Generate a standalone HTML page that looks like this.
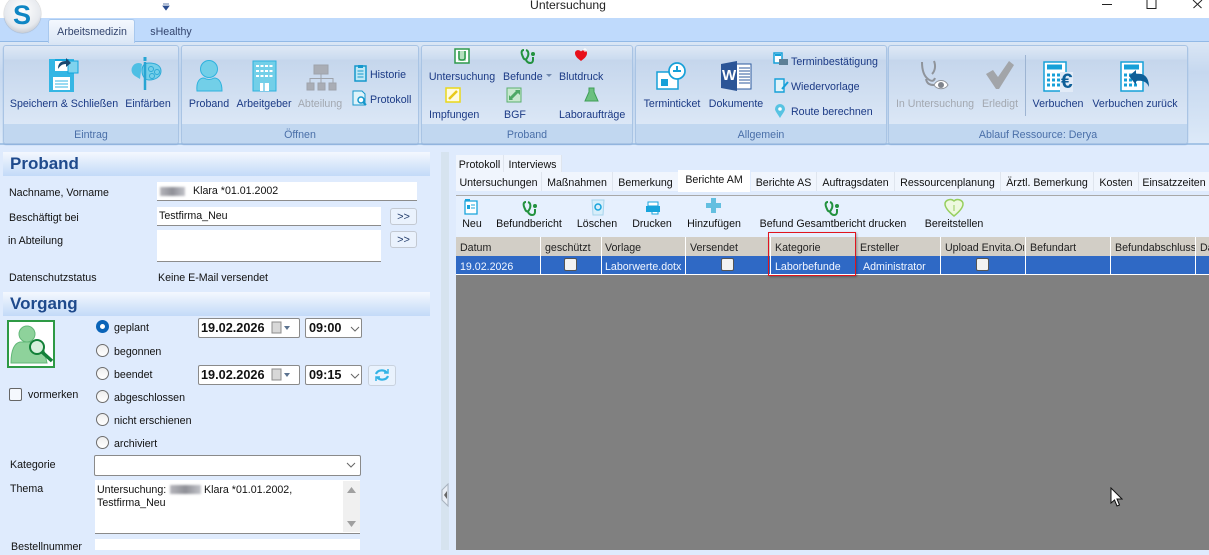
<!DOCTYPE html>
<html><head><meta charset="utf-8"><style>
html,body{margin:0;padding:0}
body{width:1209px;height:550px;overflow:hidden;position:relative;background:#dfebfd;font-family:"Liberation Sans",sans-serif;font-size:10.65px;color:#111}
div,span,svg{position:absolute}
.t{white-space:nowrap;line-height:16px}
.n{color:#1b3a85;font-size:10.65px}
.c{transform:translateX(-50%)}
.d{color:#a3a8b0}
.g{top:45px;height:97px;border:1px solid #a9c4e4;border-radius:3px;background:linear-gradient(#dfe8f5 0,#cbdcf0 13px,#c5d6ec 14px,#dbe7f6 78px);box-shadow:0 1px 1px #8fb2dc;overflow:hidden}
.gl{left:0;right:0;top:78px;height:19px;background:#c1d7f0;color:#4a6fa8;text-align:center;line-height:22px;font-size:10.65px}
.h{left:3px;width:427px;height:24px;background:linear-gradient(#f4f8fe,#c3daf8)}
.hh{font-weight:bold;font-size:17px;color:#1f4a8c;left:10px;line-height:20px;white-space:nowrap}
.f{background:#fff;border-bottom:1px solid #8c8c8c;box-sizing:border-box;line-height:19px;padding-left:2px;white-space:nowrap}
.r{width:11px;height:11px;border:1px solid #6d6d6d;border-radius:50%;left:96px;background:linear-gradient(#eee,#fff)}
.b{width:25px;height:15px;border:1px solid #c3c9d2;border-radius:3px;background:#eaf2fd;left:390px;text-align:center;font-size:11px;line-height:17px;color:#27406e}
.dt{background:#fff;border:1px solid #8a8a8a;border-radius:2px;height:18px;font-weight:bold;font-size:12.7px;line-height:18px;padding-left:2px;width:98px}
.tm{background:#fff;border:1px solid #8a8a8a;border-radius:2px;height:18px;font-weight:bold;font-size:12.7px;line-height:18px;padding-left:3px;width:52px}
.tab{top:172px;height:19px;background:#f0f5fd;line-height:22px;text-align:center;white-space:nowrap;border-right:1px solid #dfe5ee}
.col{top:237px;height:38px;width:1px;background:#fff}
.hd{top:241px;line-height:14px;white-space:nowrap;color:#222}
.rw{top:259px;line-height:16px;white-space:nowrap;color:#f2f6ff}
.ck{top:258px;width:11px;height:11px;border:1px solid #555;border-radius:2px;background:#f2f2f2}
.blur{background:linear-gradient(90deg,#b5b5bb,#8f9097 50%,#c2c3c9);filter:blur(1px);height:9px}
</style></head><body>
<div style="left:0;top:0;width:1209px;height:18px;background:#fff"></div>
<div style="left:0;top:18px;width:1209px;height:24px;background:#bfdafc;border-bottom:1px solid #92b9e6;box-sizing:border-box"></div>
<div style="left:0;top:42px;width:1209px;height:103px;background:linear-gradient(#dae6f5,#c6d8ef 30%,#dce9f8);border-bottom:2px solid #a5c4e6;box-sizing:border-box"></div>
<div style="left:4px;top:-5px;width:37px;height:38px;border-radius:50%;background:radial-gradient(circle at 50% 40%,#fff,#e6e9ee 60%,#a3a9b3);box-shadow:0 0 1px #777"></div>
<div style="left:13px;top:2px;font-weight:bold;font-size:27px;line-height:26px;color:#0f86c4;white-space:nowrap">S</div>
<svg style="left:162px;top:3px" width="9" height="8"><path d="M1 1h6M1 3h6L4 7z" fill="#2a4c8e" stroke="#2a4c8e" stroke-width=".8"/></svg>
<div class="t c" style="left:568px;top:-3px;font-size:12.2px;color:#222">Untersuchung</div>
<svg style="left:1090px;top:0" width="119" height="10" fill="none" stroke="#222"><path d="M12 4.500h10M57 0v8.500h9V0M103 0l8.500 8M112 0l-8.500 8"/></svg>
<div style="left:48px;top:19px;width:87px;height:24px;background:linear-gradient(#f4f8fe,#dbe7f6);border:1px solid #a8c8ee;border-bottom:0;border-radius:3px 3px 0 0;box-sizing:border-box"></div>
<div class="t c n" style="left:92px;top:24px;color:#33456e">Arbeitsmedizin</div>
<div class="t c n" style="left:171px;top:24px;color:#33456e">sHealthy</div>

<div class="g" style="left:3px;width:174px"><div class="gl">Eintrag</div></div>
<div class="g" style="left:181px;width:236px"><div class="gl">Öffnen</div></div>
<div class="g" style="left:421px;width:210px"><div class="gl">Proband</div></div>
<div class="g" style="left:635px;width:250px"><div class="gl">Allgemein</div></div>
<div class="g" style="left:888px;width:298px"><div class="gl">Ablauf Ressource: Derya</div></div>
<div style="left:1025px;top:55px;width:1px;height:61px;background:#9db4d2"></div>

<div class="t n c" style="left:64px;top:96px">Speichern &amp; Schließen</div>
<div class="t n c" style="left:148px;top:96px">Einfärben</div>
<div class="t n c" style="left:209px;top:96px">Proband</div>
<div class="t n c" style="left:264px;top:96px">Arbeitgeber</div>
<div class="t n c d" style="left:320px;top:96px">Abteilung</div>
<div class="t n" style="left:370px;top:67px">Historie</div>
<div class="t n" style="left:370px;top:92px">Protokoll</div>
<div class="t n c" style="left:462px;top:69px">Untersuchung</div>
<div class="t n" style="left:503px;top:69px">Befunde</div>
<div class="t n" style="left:559px;top:69px">Blutdruck</div>
<div class="t n" style="left:429px;top:107px">Impfungen</div>
<div class="t n" style="left:504px;top:107px">BGF</div>
<div class="t n" style="left:559px;top:107px">Laboraufträge</div>
<div class="t n c" style="left:672px;top:96px">Terminticket</div>
<div class="t n c" style="left:736px;top:96px">Dokumente</div>
<div class="t n" style="left:791px;top:54px">Terminbestätigung</div>
<div class="t n" style="left:791px;top:79px">Wiedervorlage</div>
<div class="t n" style="left:791px;top:104px">Route berechnen</div>
<div class="t n c d" style="left:935px;top:96px">In Untersuchung</div>
<div class="t n c d" style="left:1000px;top:96px">Erledigt</div>
<div class="t n c" style="left:1058px;top:96px">Verbuchen</div>
<div class="t n c" style="left:1135px;top:96px">Verbuchen zurück</div>

<svg style="left:0;top:42px" width="1209" height="80" fill="none">
<path d="M50 18h23v31H50z" fill="#fff" stroke="#12a5dd" stroke-width="2"/>
<path d="M49 17h6v12h14V17h5v33H49z" fill="#35b6e4"/>
<path d="M53 35h17v13H53z" fill="#fff"/><path d="M55 39h13M55 42h13M55 45h13" stroke="#35b6e4"/>
<path d="M68 19h10V31H68z" fill="#7fd3ee" stroke="#12a5dd"/>
<path d="M58 27c0-6 3-8 8-8v-3l5 5-5 4v-3c-4 0-6 2-8 5z" fill="#17476f"/>
<path d="M142 22a6 6 0 0 0-7 12l5 3z" fill="#4fbfe4"/>
<path d="M149 21c-5 0-7 3-7 8s3 9 7 9c6 0 12-3 12-9s-6-8-12-8z" fill="#76cfe9" stroke="#2da9d6"/>
<circle cx="151" cy="27" r="2.500" stroke="#2da9d6"/><circle cx="157" cy="30" r="2.500" stroke="#2da9d6"/><circle cx="152" cy="34" r="2.500" stroke="#2da9d6"/>
<path d="M145 20v28" stroke="#27a5d3" stroke-width="2.500"/><path d="M145 19v-4" stroke="#27a5d3" stroke-width="3"/>
<circle cx="209" cy="27" r="8.500" fill="#72cfe8" stroke="#2eb2de"/>
<path d="M197 49c-1-10 3-13 7-13 3 2 7 2 10 0 4 0 8 3 8 13z" fill="#72cfe8" stroke="#2eb2de"/>
<path d="M253 19h23v30h-23z" fill="#72cfe8" stroke="#2eb2de"/>
<path d="M256 24h17M256 29h17M256 34h17" stroke="#fff" stroke-width="2" stroke-dasharray="3 1.500"/>
<path d="M260 41h9v8h-9z" fill="#fff"/><path d="M264 41v8" stroke="#2eb2de"/>
<path d="M314 23h14v9h-14zM307 41h7v7h-7zM318 41h7v7h-7zM329 41h7v7h-7z" fill="#a9adb5" stroke="#9ea3ab"/>
<path d="M321 32v9M310 41v-4.500h23V41" stroke="#9ea3ab"/>
<path d="M355 24h11v15h-11z" fill="#bfe8f5" stroke="#1597cc" stroke-width="1.500"/><path d="M358 23h5v3h-5z" fill="#1597cc"/><path d="M357.500 29h6M357.500 32h6M357.500 35h6" stroke="#1597cc"/>
<path d="M353 49h9l3 3v11h-12z" fill="#dff3fa" stroke="#1597cc"/>
<path d="M455 7h14v14h-14z" fill="#fff" stroke="#2f9a4c" stroke-width="1.500"/><path d="M458 9h8v10h-8z" fill="#b5e0be"/><path d="M459 9v7q0 2 3 2t3-2V9" stroke="#2f9a4c" stroke-width="1.500"/>
<path d="M524 8c-3 0-3 3-1 7 1 3 3 3 4 1 2-3 2-7-1-8M526 18c2 4 7 4 7 0v-3" stroke="#23923f" stroke-width="2"/><circle cx="533" cy="12" r="2" fill="#23923f"/>
<path d="M546 32h6l-3 3z" fill="#7088ad"/>
<path d="M581 19c-4-3-6-5-6-8 0-3 4-4 6-1.500 2-2.500 6-1.500 6 1.500 0 3-2 5-6 8z" fill="#e8101a"/><path d="M583 8h4M585 6v4" stroke="#fff"/>
<path d="M446 46h14v14h-14z" fill="#fffbe0" stroke="#ead81a" stroke-width="1.500"/><path d="M449 57l8-8" stroke="#e8c81a" stroke-width="2.500"/>
<path d="M507 46h14v14h-14z" fill="#c8e8cf" stroke="#5bb06f"/><path d="M510 57l8-8" stroke="#4fa866" stroke-width="3"/><path d="M515 48h5v5zM509 53l4 5h-4z" fill="#4fa866"/>
<path d="M589 46h5v4l4 9h-13l4-9z" fill="#6cc07f" stroke="#3f9e58"/>
<path d="M657 30h21v17h-21z" fill="#fff" stroke="#16a0d8" stroke-width="1.500"/><path d="M661 37h7v7h-7z" fill="#16a0d8"/>
<circle cx="677" cy="29" r="8" fill="#fff" stroke="#16a0d8" stroke-width="1.700"/><path d="M677 24v5M673 29h8" stroke="#16a0d8" stroke-width="2"/>
<path d="M735 22h16v25h-16z" fill="#fff" stroke="#2c5a9e"/><path d="M739 26h11M739 29h11M739 32h11M739 35h11M739 38h11M739 41h11" stroke="#2c5a9e"/>
<path d="M721 22l16-3v30l-16-3z" fill="#2b5597"/>
<path d="M774 11h8v10h-8z" fill="#fff" stroke="#16a0d8" stroke-width="1.500"/><path d="M775 12h6v2h-6z" fill="#16a0d8"/><path d="M779 17h9v6h-9z" fill="#5d7f96"/>
<path d="M775 37h9v13h-9z" fill="#e1f3fa" stroke="#16a0d8" stroke-width="1.400"/><path d="M782 47l6-7" stroke="#16a0d8" stroke-width="2"/>
<path d="M780 76c-3-5-5-7-5-9a5 5 0 0 1 10 0c0 2-2 4-5 9z" fill="#57c3e2"/><circle cx="780" cy="67" r="1.800" fill="#fff"/>
<path d="M922 20c0 8 2 14 6 17s6 2 7-1M934 19c2 5 1 10-2 13" stroke="#8f949b" stroke-width="2"/>
<path d="M926 37c1 5 4 6 8 6" stroke="#8f949b" stroke-width="2"/>
<path d="M934 43c3-6 11-6 14 0-3 5-11 5-14 0z" fill="#fff" stroke="#8f949b"/><circle cx="941" cy="43" r="3" fill="#7f848c"/>
<path d="M986 32l7-4 5 7 11-16 5 4-15 24h-3z" fill="#a2a5a9"/>
<path d="M1044 20h22v29h-22z" fill="#fff" stroke="#16a0d8" stroke-width="1.500"/><path d="M1047 22.500h15v5h-15z" fill="#16a0d8"/><path d="M1047 33h14M1047 38h14M1047 43h14" stroke="#16a0d8" stroke-width="3" stroke-dasharray="3 2"/>
<path d="M1121 20h22v29h-22z" fill="#fff" stroke="#16a0d8" stroke-width="1.500"/><path d="M1124 22.500h15v5h-15z" fill="#16a0d8"/><path d="M1124 33h14M1124 38h14M1124 43h14" stroke="#16a0d8" stroke-width="3" stroke-dasharray="3 2"/>
<path d="M1129 34l7-6v4c6-1 13 1 13 13-2-5-6-7-13-6v4z" fill="#0e5f98"/>
</svg>
<div style="left:722px;top:68px;font-weight:bold;font-size:15px;line-height:16px;color:#fff">W</div>
<div style="left:1060px;top:72px;font-weight:bold;font-size:21px;line-height:20px;color:#0e5f98;background:#e2ebf7;padding:0 0 0 1px">€</div>
<svg style="left:352px;top:91px" width="16" height="16" fill="none"><circle cx="9" cy="9" r="3" stroke="#1597cc" stroke-width="1.500" fill="#fff"/><path d="M11 11l3 3" stroke="#1597cc" stroke-width="2"/></svg>

<div class="h" style="top:152px"></div><div class="hh" style="top:154px">Proband</div>
<div class="t" style="left:9px;top:185px">Nachname, Vorname</div>
<div class="f" style="left:157px;top:182px;width:260px;height:19px"><span class="blur" style="left:3px;top:5px;width:25px"></span><span class="t" style="left:36px;top:1px">Klara *01.01.2002</span></div>
<div class="t" style="left:9px;top:210px">Beschäftigt bei</div>
<div class="f" style="left:157px;top:207px;width:224px;height:19px">Testfirma_Neu</div>
<div class="b" style="top:208px">&gt;&gt;</div>
<div class="t" style="left:8px;top:233px">in Abteilung</div>
<div class="f" style="left:157px;top:230px;width:224px;height:32px"></div>
<div class="b" style="top:231px">&gt;&gt;</div>
<div class="t" style="left:9px;top:270px">Datenschutzstatus</div>
<div class="t" style="left:158px;top:270px">Keine E-Mail versendet</div>
<div class="h" style="top:292px"></div><div class="hh" style="top:294px">Vorgang</div>

<svg style="left:7px;top:320px" width="48" height="48" fill="none">
<rect x="1" y="1" width="46" height="46" fill="#fff" stroke="#2e9a45" stroke-width="2"/>
<circle cx="20" cy="14" r="8" fill="#8ed29b" stroke="#62b878"/>
<path d="M4 43c0-14 4-20 9-21h14l10 8 3 13z" fill="#8ed29b" stroke="#62b878"/>
<circle cx="30" cy="27" r="7" fill="#d8f0dd" stroke="#128038" stroke-width="2"/>
<path d="M35 32l10 9" stroke="#128038" stroke-width="3.500"/></svg>
<div class="r" style="top:320px;border:0;width:13px;height:13px;background:#0a64b8"></div><div style="left:100px;top:324px;width:5px;height:5px;border-radius:50%;background:#fff"></div>
<div class="t" style="left:114px;top:320px">geplant</div>
<div class="r" style="top:344px"></div><div class="t" style="left:114px;top:344px">begonnen</div>
<div class="r" style="top:367px"></div><div class="t" style="left:114px;top:367px">beendet</div>
<div class="r" style="top:390px"></div><div class="t" style="left:114px;top:390px">abgeschlossen</div>
<div class="r" style="top:413px"></div><div class="t" style="left:114px;top:413px">nicht erschienen</div>
<div class="r" style="top:436px"></div><div class="t" style="left:114px;top:436px">archiviert</div>
<div style="left:9px;top:388px;width:11px;height:11px;border:1px solid #666;border-radius:2px;background:#f5f8fd"></div>
<div class="t" style="left:28px;top:387px">vormerken</div>

<div class="dt" style="left:198px;top:318px">19.02.2026</div>
<div class="tm" style="left:305px;top:318px">09:00</div>
<div class="dt" style="left:198px;top:365px">19.02.2026</div>
<div class="tm" style="left:305px;top:365px">09:15</div>
<svg style="left:270px;top:321px" width="95" height="62" fill="none">
<path d="M2 1h9v11H2z" fill="#d8d8d8" stroke="#8d8d8d"/><path d="M14 5h6l-3 4z" fill="#5c7390"/><path d="M81 6l4 4 4-4" stroke="#666"/>
<path d="M2 48h9v11H2z" fill="#d8d8d8" stroke="#8d8d8d"/><path d="M14 52h6l-3 4z" fill="#5c7390"/><path d="M81 53l4 4 4-4" stroke="#666"/></svg>
<div style="left:368px;top:365px;width:26px;height:19px;border:1px solid #c9d2de;border-radius:3px;background:#e9f2fd"></div>
<svg style="left:374px;top:367px" width="16" height="16" fill="none" stroke="#33b3e6" stroke-width="2.200"><path d="M2 7a6 5 0 0 1 11-1M14 9a6 5 0 0 1-11 1"/><path d="M10 6h4V2M6 10H2v4" stroke-width="1.500"/></svg>

<div class="t" style="left:10px;top:457px">Kategorie</div>
<div style="left:94px;top:455px;width:265px;height:19px;background:#fff;border:1px solid #8a8a8a;border-radius:2px"></div>
<svg style="left:346px;top:462px" width="12" height="8" fill="none" stroke="#666"><path d="M1 1l4 4 4-4"/></svg>
<div class="t" style="left:10px;top:481px">Thema</div>
<div style="left:95px;top:480px;width:265px;height:53px;background:#fff;border-bottom:1px solid #8a8a8a"></div>
<div class="t" style="left:97px;top:482px">Untersuchung:</div>
<div class="blur" style="left:170px;top:485px;width:31px"></div>
<div class="t" style="left:204px;top:482px">Klara *01.01.2002,</div>
<div class="t" style="left:97px;top:495px">Testfirma_Neu</div>
<div style="left:343px;top:481px;width:17px;height:51px;background:#f0f0f0"></div>
<svg style="left:343px;top:481px" width="17" height="51" fill="#a0a0a0"><path d="M4 12l4.500-6 4.500 6zM4 40l4.500 6 4.500-6z"/></svg>
<div class="t" style="left:11px;top:539px">Bestellnummer</div>
<div style="left:95px;top:539px;width:265px;height:11px;background:#fff"></div>

<div style="left:441px;top:152px;width:8px;height:398px;background:#d6e3ef"></div>
<svg style="left:441px;top:483px" width="8" height="24"><path d="M7 1L1 7v10l6 6z" fill="#e8eef6" stroke="#a8b2bf"/><path d="M6 8L3 12l3 4z" fill="#666"/></svg>

<div class="tab" style="left:456px;top:155px;width:47px;height:17px;line-height:20px">Protokoll</div>
<div class="tab" style="left:504px;top:155px;width:57px;height:17px;line-height:20px">Interviews</div>
<div class="tab" style="left:456px;width:85px">Untersuchungen</div>
<div class="tab" style="left:542px;width:70px">Maßnahmen</div>
<div class="tab" style="left:613px;width:65px">Bemerkung</div>
<div class="tab" style="left:678px;top:170px;width:72px;height:22px;background:#fff;border:0;line-height:21px">Berichte AM</div>
<div class="tab" style="left:751px;width:65px">Berichte AS</div>
<div class="tab" style="left:817px;width:77px">Auftragsdaten</div>
<div class="tab" style="left:895px;width:105px">Ressourcenplanung</div>
<div class="tab" style="left:1001px;width:92px">Ärztl. Bemerkung</div>
<div class="tab" style="left:1094px;width:44px">Kosten</div>
<div class="tab" style="left:1139px;width:70px">Einsatzzeiten</div>

<div style="left:456px;top:195px;width:753px;height:1px;background:#a8a8a8"></div>
<div style="left:456px;top:196px;width:753px;height:41px;background:#e6f0fe"></div>
<div class="t c" style="left:472px;top:216px">Neu</div>
<div class="t c" style="left:529px;top:216px">Befundbericht</div>
<div class="t c" style="left:597px;top:216px">Löschen</div>
<div class="t c" style="left:652px;top:216px">Drucken</div>
<div class="t c" style="left:714px;top:216px">Hinzufügen</div>
<div class="t c" style="left:833px;top:216px">Befund Gesamtbericht drucken</div>
<div class="t c" style="left:954px;top:216px">Bereitstellen</div>
<svg style="left:456px;top:196px" width="520" height="22" fill="none">
<path d="M9 5h12v13H9z" fill="#fff" stroke="#18a4dc" stroke-width="1.300"/><path d="M9 3h5v2H9z" fill="#18a4dc"/><path d="M11 9h3v4h-3z" fill="#18a4dc"/><path d="M15 9h4M15 12h4" stroke="#18a4dc"/>
<path d="M70 6c-3 0-3 3-1 7 1 3 3 3 4 1 2-3 2-7-1-8M72 16c2 4 7 4 7 0v-3" stroke="#23923f" stroke-width="2"/><circle cx="79" cy="10" r="2" fill="#23923f"/>
<path d="M136 4h12l-1 15h-10z" fill="#d8eefa" stroke="#a6d4ec"/><circle cx="142" cy="11" r="3" stroke="#18a4dc" stroke-width="1.500"/>
<path d="M192 6h10v4h-10zM196 15h6v3h-6z" fill="#fff" stroke="#18a4dc"/><path d="M190 10h14v6h-14z" fill="#18a4dc"/>
<path d="M255 2h5v5h5v5h-5v5h-5v-5h-5v-5h5z" fill="#63bfe0"/>
<path d="M372 6c-3 0-3 3-1 7 1 3 3 3 4 1 2-3 2-7-1-8M374 16c2 4 7 4 7 0v-3" stroke="#23923f" stroke-width="2"/><circle cx="381" cy="10" r="2" fill="#23923f"/>
<path d="M498 20c-5-4-9-8-9-12 0-4 6-6 9-3 3-3 9-1 9 3 0 4-4 8-9 12z" fill="#eef9df" stroke="#97cf5f" stroke-width="1.500"/><path d="M498 9v6" stroke="#97cf5f"/>
</svg>

<div style="left:456px;top:237px;width:753px;height:19px;background:#d2cec6"></div>
<div style="left:456px;top:256px;width:753px;height:18px;background:#2f69c5"></div>
<div style="left:456px;top:274px;width:753px;height:1px;background:#fff"></div>
<div style="left:456px;top:275px;width:753px;height:275px;background:#808080"></div>
<div class="col" style="left:540px"></div><div class="col" style="left:601px"></div><div class="col" style="left:685px"></div><div class="col" style="left:770px"></div><div class="col" style="left:855px"></div><div class="col" style="left:940px"></div><div class="col" style="left:1025px"></div><div class="col" style="left:1110px"></div><div class="col" style="left:1195px"></div>
<div class="hd" style="left:460px">Datum</div><div class="hd" style="left:545px">geschützt</div><div class="hd" style="left:605px">Vorlage</div><div class="hd" style="left:690px">Versendet</div><div class="hd" style="left:775px">Kategorie</div><div class="hd" style="left:860px">Ersteller</div>
<div class="hd" style="left:945px;width:79px;overflow:hidden">Upload Envita.Online</div><div class="hd" style="left:1030px">Befundart</div><div class="hd" style="left:1115px;width:80px;overflow:hidden">Befundabschluss</div><div class="hd" style="left:1200px;width:9px;overflow:hidden">Datum</div>
<div class="rw" style="left:460px">19.02.2026</div><div class="rw" style="left:605px">Laborwerte.dotx</div><div class="rw" style="left:775px">Laborbefunde</div><div class="rw" style="left:863px">Administrator</div>
<div class="ck" style="left:564px"></div><div class="ck" style="left:721px"></div><div class="ck" style="left:976px"></div>
<div style="left:768px;top:232px;width:86px;height:42px;border:1px solid #e0141e;box-shadow:1px 1px 2px rgba(0,0,0,.3)"></div>
<svg style="left:1110px;top:487px" width="13" height="20"><path d="M1 1v15l3.500-3 2.500 6 2.500-1-2.500-6h5z" fill="#fff" stroke="#111"/></svg>
</body></html>
